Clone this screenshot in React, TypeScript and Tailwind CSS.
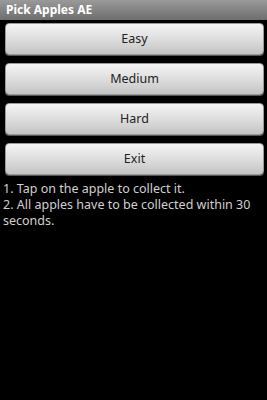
export default function App() {
  const levels = ['Easy', 'Medium', 'Hard', 'Exit'];
  return (
    <div className="flex h-[400px] w-[267px] flex-col bg-black font-['Noto_Sans',sans-serif]">
      <div className="flex h-[20px] items-center bg-gradient-to-b from-[#9a9a9a] to-[#6e6e6e] px-[6px] text-[12px] font-bold text-white">
        Pick Apples AE
      </div>
      <div className="flex flex-col gap-[8px] pl-[5px] pr-[3px] pt-[3px]">
        {levels.map((l) => (
          <button
            key={l}
            className="flex h-[32px] items-center justify-center rounded-[4px] border border-[#9a9a9a] bg-gradient-to-b from-[#f4f4f4] via-[#dedede] to-[#c4c4c4] text-[12.5px] text-[#222] shadow-[0_1px_0_#555]"
          >
            {l}
          </button>
        ))}
      </div>
      <div className="px-[3px] pt-[6px] text-[12.5px] leading-[16px] text-[#d0d0d0]">
        <p>1. Tap on the apple to collect it.</p>
        <p>2. All apples have to be collected within 30 seconds.</p>
      </div>
    </div>
  );
}
